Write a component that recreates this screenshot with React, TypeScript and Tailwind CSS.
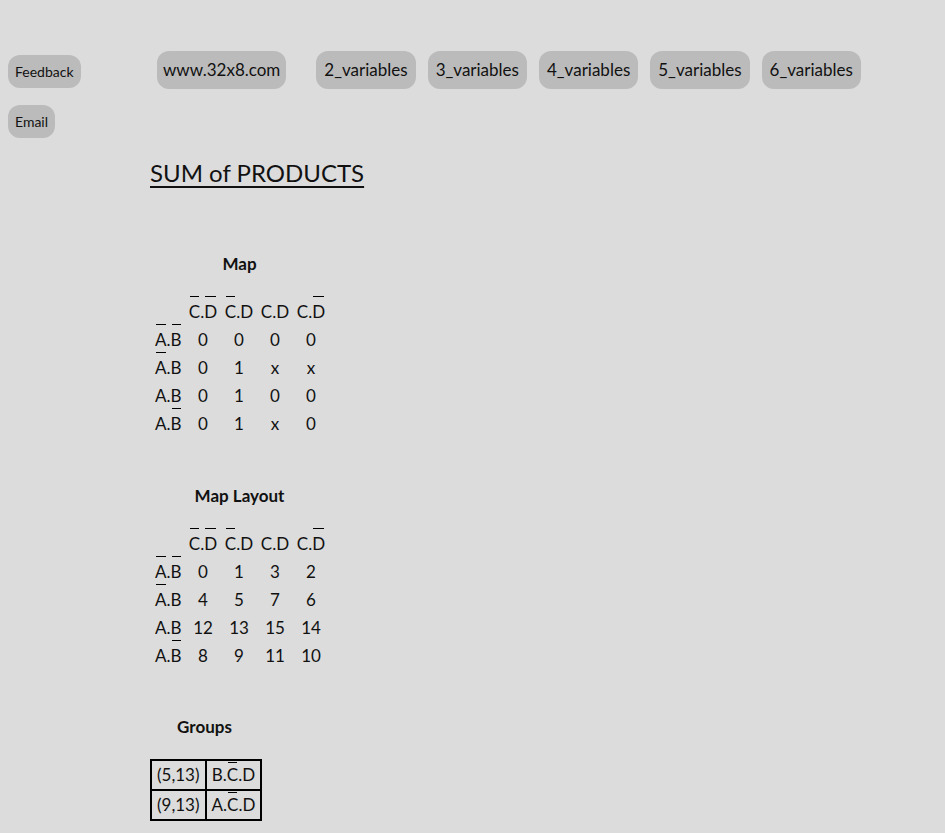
import React from "react";

const font = { fontFamily: "Lato, 'Liberation Sans', sans-serif" };

// letter with a bar over it (complement)
function Bar({ children, top = "-top-[3px]" }: { children: React.ReactNode; top?: string }) {
  return (
    <span className="relative inline-block">
      {children}
      <span className={`absolute left-[1px] right-[1px] ${top} border-t border-black`} />
    </span>
  );
}

const colHeads = [
  <><Bar>C</Bar>.<Bar>D</Bar></>,
  <><Bar>C</Bar>.D</>,
  <>C.D</>,
  <>C.<Bar>D</Bar></>,
];

const rowHeads = [
  <><Bar>A</Bar>.<Bar>B</Bar></>,
  <><Bar>A</Bar>.B</>,
  <>A.B</>,
  <>A.<Bar>B</Bar></>,
];

function KMap({ title, rows }: { title: string; rows: string[][] }) {
  return (
    <div className="w-[179px] flex flex-col">
      <div className="text-center font-bold text-[17px] h-[28px] leading-[28px]">{title}</div>
      <div className="grid grid-cols-[35px_36px_36px_36px_36px] mt-[20px] text-[17px]">
        <div className="h-[28px]" />
        {colHeads.map((h, i) => (
          <div key={i} className="h-[28px] flex items-center justify-center">{h}</div>
        ))}
        {rows.map((r, ri) => (
          <React.Fragment key={ri}>
            <div className="h-[28px] flex items-center pl-[5px]">{rowHeads[ri]}</div>
            {r.map((v, ci) => (
              <div key={ci} className="h-[28px] flex items-center justify-center">{v}</div>
            ))}
          </React.Fragment>
        ))}
      </div>
    </div>
  );
}

export default function App() {
  const navItems = ["2_variables", "3_variables", "4_variables", "5_variables", "6_variables"];

  return (
    <div className="min-h-screen bg-[#dcdcdc] text-[#111] flex" style={font}>
      <aside className="w-[150px] shrink-0 px-2 pt-[55px] flex flex-col items-start gap-[17px]">
        <button className="h-[33px] px-[7px] rounded-[12px] bg-[#bbbbbb] text-[14px]">Feedback</button>
        <button className="h-[33px] px-[7px] rounded-[12px] bg-[#bbbbbb] text-[14px]">Email</button>
      </aside>

      <main className="flex-1 pt-[51px] pb-4">
        <nav className="flex items-center pl-[7px]">
          <button className="h-[38px] px-[6px] rounded-[12px] bg-[#bbbbbb] text-[17px] mr-[30px]">
            www.32x8.com
          </button>
          <div className="flex gap-[12px]">
            {navItems.map((n) => (
              <button key={n} className="h-[38px] px-[8px] rounded-[12px] bg-[#bbbbbb] text-[17px]">
                {n}
              </button>
            ))}
          </div>
        </nav>

        <h1 className="mt-[68px] text-[24px] underline underline-offset-[4px] leading-[32px]">SUM of PRODUCTS</h1>

        <div className="mt-[61px]">
          <KMap
            title="Map"
            rows={[
              ["0", "0", "0", "0"],
              ["0", "1", "x", "x"],
              ["0", "1", "0", "0"],
              ["0", "1", "x", "0"],
            ]}
          />
        </div>

        <div className="mt-[44px]">
          <KMap
            title="Map Layout"
            rows={[
              ["0", "1", "3", "2"],
              ["4", "5", "7", "6"],
              ["12", "13", "15", "14"],
              ["8", "9", "11", "10"],
            ]}
          />
        </div>

        <div className="mt-[43px] w-[109px] flex flex-col">
          <div className="text-center font-bold text-[17px] h-[28px] leading-[28px]">Groups</div>
          <table className="mt-[18px] border-collapse border-2 border-black text-[17px] whitespace-nowrap">
            <tbody>
              <tr>
                <td className="border-2 border-black h-[30px] px-[5px] py-0 leading-[26px] text-center">(5,13)</td>
                <td className="border-2 border-black h-[30px] px-[5px] py-0 leading-[26px] text-center">
                  B.<Bar top="top-0">C</Bar>.D
                </td>
              </tr>
              <tr>
                <td className="border-2 border-black h-[30px] px-[5px] py-0 leading-[26px] text-center">(9,13)</td>
                <td className="border-2 border-black h-[30px] px-[5px] py-0 leading-[26px] text-center">
                  A.<Bar top="top-0">C</Bar>.D
                </td>
              </tr>
            </tbody>
          </table>
        </div>
      </main>
    </div>
  );
}
